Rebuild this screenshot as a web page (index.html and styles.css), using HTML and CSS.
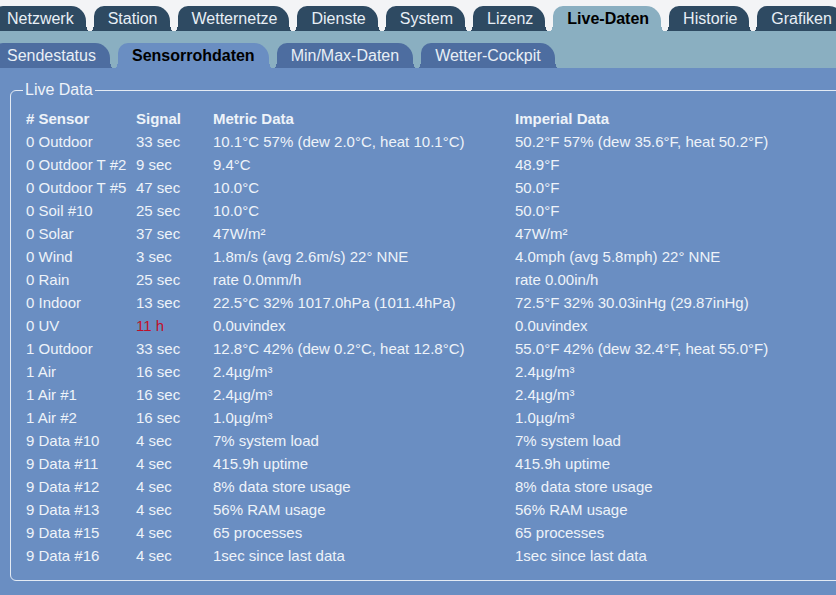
FILE: index.html
```html
<!DOCTYPE html>
<html lang="de">
<head>
<meta charset="utf-8">
<title>Live-Daten</title>
<link rel="stylesheet" href="styles.css">
</head>
<body>
<div class="topbar">
  <ul class="tabs">
    <li class="tab">Netzwerk</li>
    <li class="tab">Station</li>
    <li class="tab">Wetternetze</li>
    <li class="tab">Dienste</li>
    <li class="tab">System</li>
    <li class="tab">Lizenz</li>
    <li class="tab active">Live-Daten</li>
    <li class="tab">Historie</li>
    <li class="tab">Grafiken</li>
  </ul>
</div>
<div class="subbar">
  <ul class="tabs">
    <li class="subtab">Sendestatus</li>
    <li class="subtab active">Sensorrohdaten</li>
    <li class="subtab">Min/Max-Daten</li>
    <li class="subtab">Wetter-Cockpit</li>
  </ul>
</div>
<div class="content">
  <fieldset class="box">
    <legend class="legend">Live Data</legend>
    <table class="data">
      <thead>
        <tr><th class="c1"># Sensor</th><th class="c2">Signal</th><th class="c3">Metric Data</th><th class="c4">Imperial Data</th></tr>
      </thead>
      <tbody>
        <tr><td>0 Outdoor</td><td>33 sec</td><td>10.1°C 57% (dew 2.0°C, heat 10.1°C)</td><td>50.2°F 57% (dew 35.6°F, heat 50.2°F)</td></tr>
        <tr><td>0 Outdoor T #2</td><td>9 sec</td><td>9.4°C</td><td>48.9°F</td></tr>
        <tr><td>0 Outdoor T #5</td><td>47 sec</td><td>10.0°C</td><td>50.0°F</td></tr>
        <tr><td>0 Soil #10</td><td>25 sec</td><td>10.0°C</td><td>50.0°F</td></tr>
        <tr><td>0 Solar</td><td>37 sec</td><td>47W/m²</td><td>47W/m²</td></tr>
        <tr><td>0 Wind</td><td>3 sec</td><td>1.8m/s (avg 2.6m/s) 22° NNE</td><td>4.0mph (avg 5.8mph) 22° NNE</td></tr>
        <tr><td>0 Rain</td><td>25 sec</td><td>rate 0.0mm/h</td><td>rate 0.00in/h</td></tr>
        <tr><td>0 Indoor</td><td>13 sec</td><td>22.5°C 32% 1017.0hPa (1011.4hPa)</td><td>72.5°F 32% 30.03inHg (29.87inHg)</td></tr>
        <tr><td>0 UV</td><td class="warn">11 h</td><td>0.0uvindex</td><td>0.0uvindex</td></tr>
        <tr><td>1 Outdoor</td><td>33 sec</td><td>12.8°C 42% (dew 0.2°C, heat 12.8°C)</td><td>55.0°F 42% (dew 32.4°F, heat 55.0°F)</td></tr>
        <tr><td>1 Air</td><td>16 sec</td><td>2.4µg/m³</td><td>2.4µg/m³</td></tr>
        <tr><td>1 Air #1</td><td>16 sec</td><td>2.4µg/m³</td><td>2.4µg/m³</td></tr>
        <tr><td>1 Air #2</td><td>16 sec</td><td>1.0µg/m³</td><td>1.0µg/m³</td></tr>
        <tr><td>9 Data #10</td><td>4 sec</td><td>7% system load</td><td>7% system load</td></tr>
        <tr><td>9 Data #11</td><td>4 sec</td><td>415.9h uptime</td><td>415.9h uptime</td></tr>
        <tr><td>9 Data #12</td><td>4 sec</td><td>8% data store usage</td><td>8% data store usage</td></tr>
        <tr><td>9 Data #13</td><td>4 sec</td><td>56% RAM usage</td><td>56% RAM usage</td></tr>
        <tr><td>9 Data #15</td><td>4 sec</td><td>65 processes</td><td>65 processes</td></tr>
        <tr><td>9 Data #16</td><td>4 sec</td><td>1sec since last data</td><td>1sec since last data</td></tr>
      </tbody>
    </table>
  </fieldset>
</div>
</body>
</html>
```
FILE: styles.css
```css
html, body {
  margin: 0;
  padding: 0;
  overflow: hidden;
}
body {
  font-family: "Liberation Sans", Arial, sans-serif;
  background: #6a8ec2;
  color: #eef3f9;
  height: 595px;
}
.tabs {
  list-style: none;
  margin: 0 0 0 -7px;
  padding: 0;
  display: flex;
  gap: 8px;
  white-space: nowrap;
}
.topbar {
  background: #f3f4f6;
  padding-top: 6px;
  overflow: hidden;
}
.subbar {
  background: #8aafc1;
  padding-top: 12px;
  overflow: hidden;
}
.tab, .subtab {
  position: relative;
  height: 25px;
  line-height: 25px;
  font-size: 16px;
  padding: 0 12px 0 14px;
  border-radius: 10px 15px 0 0;
  flex: none;
}
.tab {
  background: #2e4a62;
  color: #e8eff6;
  --tabc: #2e4a62;
}
.tab.active {
  background: #8aafc1;
  color: #000;
  font-weight: bold;
  --tabc: #8aafc1;
}
.subtab {
  padding-right: 14px;
  background: #4d6da0;
  color: #e8eff6;
  --tabc: #4d6da0;
}
.subtab.active {
  background: #6a8ec2;
  color: #000;
  font-weight: bold;
  --tabc: #6a8ec2;
}
.tab::before, .subtab::before,
.tab::after, .subtab::after {
  content: "";
  position: absolute;
  bottom: 0;
  width: 3px;
  height: 8px;
}
.tab::before, .subtab::before {
  left: -3px;
  background: radial-gradient(ellipse 3px 8px at 0 0, transparent 95%, var(--tabc) 100%);
}
.tab::after, .subtab::after {
  right: -3px;
  background: radial-gradient(ellipse 3px 8px at 100% 0, transparent 95%, var(--tabc) 100%);
}
.content {
  padding: 13px 0 0 10px;
  overflow: hidden;
}
.box {
  margin: 0 -30px 0 0;
  border: 1px solid #e4ebf4;
  border-radius: 6px;
  padding: 8px 0 13px 12px;
}
.legend {
  font-size: 16px;
  padding: 0 2px;
  color: #eef3f9;
}
.data {
  border-collapse: collapse;
  margin-left: 3px;
  font-size: 15px;
}
.data th, .data td {
  padding: 0;
  height: 23px;
  text-align: left;
  vertical-align: middle;
  white-space: nowrap;
}
.data th {
  font-weight: bold;
}
.c1 { width: 110px; }
.c2 { width: 77px; }
.c3 { width: 302px; }
.warn {
  color: #c0102a;
}
```
